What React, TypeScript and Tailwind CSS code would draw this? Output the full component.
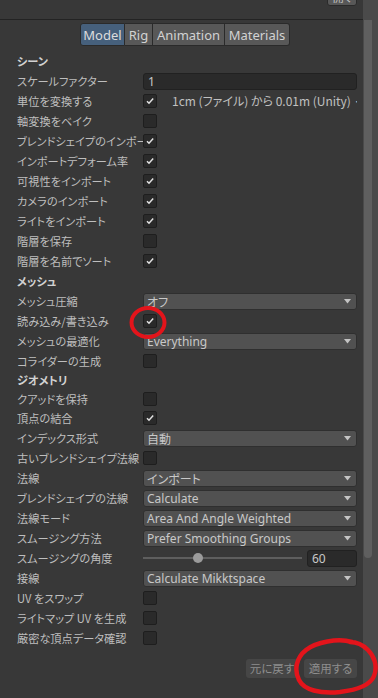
import React from "react";

const JP = "font-['Noto_Sans_CJK_JP','Noto_Sans',sans-serif] [font-feature-settings:'palt']";
const EN = "font-['Noto_Sans','Noto_Sans_CJK_JP',sans-serif]";

function Check({ on }: { on?: boolean }) {
  return (
    <div className="w-[14px] h-[14px] shrink-0 rounded-[2px] bg-[#2a2a2a] border border-[#1e1e1e] flex items-center justify-center">
      {on && (
        <svg width="10" height="10" viewBox="0 0 10 10">
          <path d="M2 5.2 L4 7.2 L8.2 2.6" fill="none" stroke="#e2e2e2" strokeWidth="1.5" />
        </svg>
      )}
    </div>
  );
}

function Drop({ text, jp }: { text: string; jp?: boolean }) {
  return (
    <div className="h-[17px] w-full rounded-[3px] bg-[#515151] border border-[#2f2f2f] flex items-center justify-between pl-[3px] pr-[5px]">
      <span className={`${jp ? JP : EN} text-[12px] leading-[15px] text-[#c8c8c8] whitespace-nowrap`}>{text}</span>
      <svg width="7" height="5" viewBox="0 0 7 5">
        <path d="M0 0 H7 L3.5 4.5 Z" fill="#c4c4c4" />
      </svg>
    </div>
  );
}

function Row({ label, h = 20, children, bold }: { label: string; h?: number; children?: React.ReactNode; bold?: boolean }) {
  return (
    <div className="flex items-center pl-[17px] pr-[6px]" style={{ height: h }}>
      <div className={`w-[126px] shrink-0 overflow-hidden whitespace-nowrap ${JP} text-[11.2px] leading-[16px] ${bold ? "font-bold text-[#d2d2d2]" : "text-[#bebebe]"}`}>
        {label}
      </div>
      <div className="flex-1 flex items-center min-w-0">{children}</div>
    </div>
  );
}

export default function App() {
  return (
    <div className="relative w-[378px] h-[698px] overflow-hidden bg-[#383838] flex">
      <div className="w-[363px] flex flex-col">
        {/* header */}
        <div className="h-[20px] border-b border-[#232323] flex justify-end pr-[6px] relative">
          <div className="w-[30px] h-[18px] -mt-[12px] rounded-[3px] bg-[#585858] border border-[#2a2a2a] flex items-center justify-center">
            <span className={`${JP} text-[11px] text-[#c4c4c4] leading-[14px]`}>開く</span>
          </div>
        </div>
        {/* tabs */}
        <div className="flex pl-[80px] mt-[3px] h-[23px]">
          <div className="w-[45px] rounded-l-[3px] bg-[#46607c] border border-[#2a2a2a] flex items-center justify-center">
            <span className={`${EN} text-[13px] text-[#dcdcdc] leading-[16px]`}>Model</span>
          </div>
          <div className="w-[28px] bg-[#585858] border-y border-r border-[#2a2a2a] flex items-center justify-center">
            <span className={`${EN} text-[13px] text-[#d2d2d2] leading-[16px]`}>Rig</span>
          </div>
          <div className="w-[72px] bg-[#585858] border-y border-r border-[#2a2a2a] flex items-center justify-center">
            <span className={`${EN} text-[13px] text-[#d2d2d2] leading-[16px]`}>Animation</span>
          </div>
          <div className="w-[65px] rounded-r-[3px] bg-[#585858] border-y border-r border-[#2a2a2a] flex items-center justify-center">
            <span className={`${EN} text-[13px] text-[#d2d2d2] leading-[16px]`}>Materials</span>
          </div>
        </div>
        <div className="h-[5px]" />
        <Row label="シーン" bold />
        <Row label="スケールファクター">
          <div className="h-[17px] w-full rounded-[3px] bg-[#2a2a2a] border border-[#212121] flex items-center pl-[4px]">
            <span className={`${EN} text-[12px] text-[#c8c8c8] leading-[15px]`}>1</span>
          </div>
        </Row>
        <Row label="単位を変換する">
          <Check on />
          <span className={`ml-[15px] ${JP} text-[12px] text-[#c0c0c0] leading-[16px] whitespace-nowrap overflow-hidden`}>
            1cm (ファイル) から 0.01m (Unity) ·
          </span>
        </Row>
        <Row label="軸変換をベイク"><Check /></Row>
        <Row label="ブレンドシェイプのインポート"><Check on /></Row>
        <Row label="インポートデフォーム率"><Check on /></Row>
        <Row label="可視性をインポート"><Check on /></Row>
        <Row label="カメラのインポート"><Check on /></Row>
        <Row label="ライトをインポート"><Check on /></Row>
        <Row label="階層を保存"><Check /></Row>
        <Row label="階層を名前でソート"><Check on /></Row>
        <Row label="メッシュ" bold />
        <Row label="メッシュ圧縮"><Drop text="オフ" jp /></Row>
        <Row label="読み込み/書き込み"><Check on /></Row>
        <Row label="メッシュの最適化"><Drop text="Everything" /></Row>
        <Row label="コライダーの生成"><Check /></Row>
        <Row label="ジオメトリ" bold h={18} />
        <Row label="クアッドを保持" h={19}><Check /></Row>
        <Row label="頂点の結合"><Check on /></Row>
        <Row label="インデックス形式"><Drop text="自動" jp /></Row>
        <Row label="古いブレンドシェイプ法線"><Check /></Row>
        <Row label="法線"><Drop text="インポート" jp /></Row>
        <Row label="ブレンドシェイプの法線"><Drop text="Calculate" /></Row>
        <Row label="法線モード"><Drop text="Area And Angle Weighted" /></Row>
        <Row label="スムージング方法"><Drop text="Prefer Smoothing Groups" /></Row>
        <Row label="スムージングの角度">
          <div className="flex-1 relative h-[12px] flex items-center">
            <div className="w-full h-[2px] bg-[#5e5e5e]" />
            <div className="absolute left-[50px] top-[1px] w-[10px] h-[10px] rounded-full bg-[#9b9b9b]" />
          </div>
          <div className="w-[50px] ml-[5px] h-[17px] rounded-[3px] bg-[#2a2a2a] border border-[#212121] flex items-center pl-[4px]">
            <span className={`${EN} text-[12px] text-[#c8c8c8] leading-[15px]`}>60</span>
          </div>
        </Row>
        <Row label="接線"><Drop text="Calculate Mikktspace" /></Row>
        <Row label="UV をスワップ"><Check /></Row>
        <Row label="ライトマップ UV を生成"><Check /></Row>
        <Row label="厳密な頂点データ確認"><Check /></Row>
        <div className="flex justify-end gap-[6px] pr-[6px] pt-[11px]">
          <div className="w-[52px] h-[19px] rounded-[3px] bg-[#464646] flex items-center justify-center">
            <span className={`${JP} text-[11.5px] text-[#8e8e8e] leading-[15px]`}>元に戻す</span>
          </div>
          <div className="w-[53px] h-[19px] rounded-[3px] bg-[#464646] flex items-center justify-center">
            <span className={`${JP} text-[11.5px] text-[#8e8e8e] leading-[15px]`}>適用する</span>
          </div>
        </div>
      </div>
      {/* scrollbar */}
      <div className="w-[15px] bg-[#4a4a4a] flex flex-col pt-[20px]">
        <div className="ml-[1px] w-[8px] h-[538px] rounded-b-[4px] bg-[#5f5f5f]" />
      </div>

      {/* red annotations */}
      <svg className="absolute left-[128px] top-[305px]" width="40" height="36" viewBox="0 0 40 36">
        <ellipse cx="20" cy="17.5" rx="16.5" ry="14.5" fill="none" stroke="#e3141b" strokeWidth="4" />
      </svg>
      <svg className="absolute left-[290px] top-[636px]" width="88" height="62" viewBox="0 0 88 62">
        <path
          d="M62 6 C48 2 26 6 16 14 C6 22 4 34 9 44 C14 54 30 58 50 56 C66 54 80 50 84 40 C88 30 84 20 78 14 C72 8 66 6 60 6"
          fill="none"
          stroke="#e3141b"
          strokeWidth="4.5"
          strokeLinecap="round"
        />
      </svg>
    </div>
  );
}
